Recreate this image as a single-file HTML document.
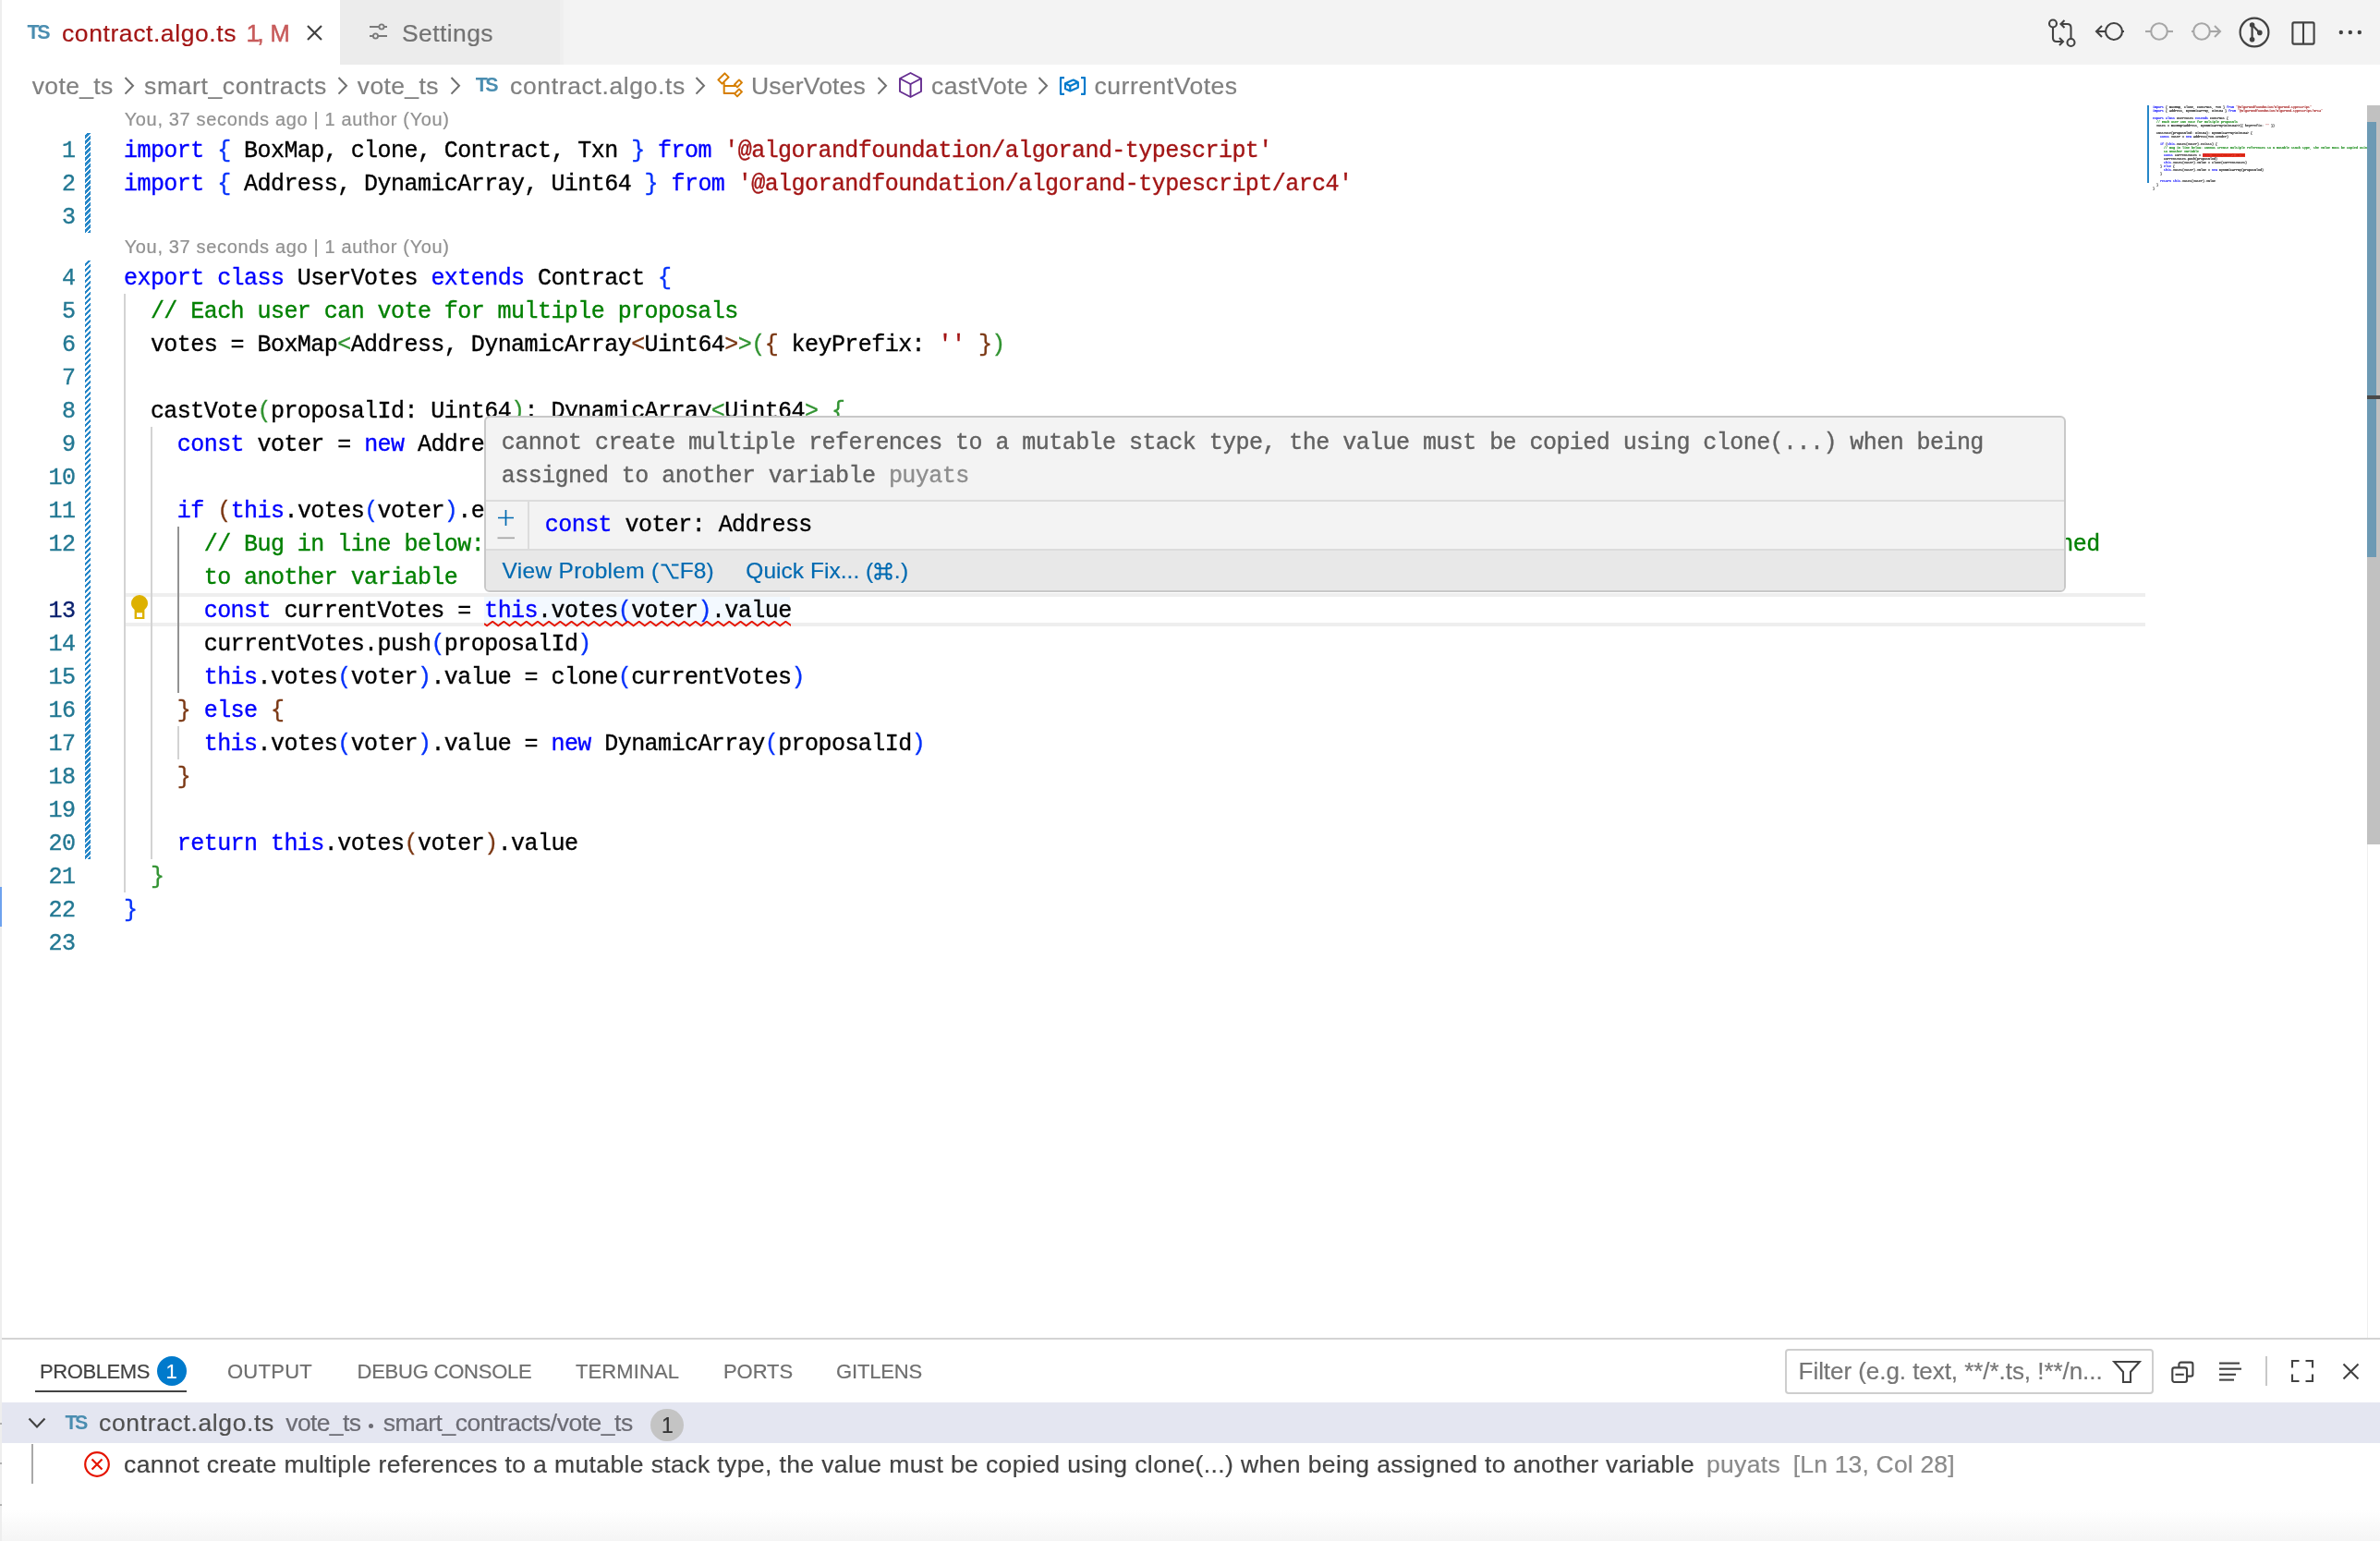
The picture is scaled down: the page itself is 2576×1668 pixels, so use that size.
<!DOCTYPE html>
<html><head><meta charset="utf-8"><title>contract.algo.ts</title>
<style>
html,body{margin:0;padding:0;}
body{width:2576px;height:1668px;overflow:hidden;position:relative;background:#fff;font-family:"Liberation Sans",sans-serif;}
.a{position:absolute;}
.t{position:absolute;white-space:pre;font-family:"Liberation Sans",sans-serif;-webkit-text-stroke:0.2px currentColor;}
.m{position:absolute;white-space:pre;font-family:"Liberation Mono",monospace;-webkit-text-stroke:0.35px currentColor;}
.mm .b1,.mm .b2,.mm .b3{color:#000 !important}.k{color:#0000ff}.s{color:#a31515}.c{color:#008000}.b1{color:#0431fa}.b2{color:#319331}.b3{color:#7b3814}
svg{position:absolute;overflow:visible}
</style></head><body>
<div id="root" style="position:absolute;left:0;top:0;width:2576px;height:1668px;overflow:hidden;background:#fff;will-change:transform">

<div class="a" style="left:0;top:0;width:2576px;height:70px;background:#f3f3f3"></div>
<div class="a" style="left:0;top:0;width:368px;height:70px;background:#ffffff"></div>
<div class="a" style="left:368px;top:0;width:238px;height:70px;background:#ececec"></div>
<div class="a" style="left:606px;top:0;width:4px;height:70px;background:#efefef"></div>
<div class="t" style="left:29.50px;top:24.60px;font-size:21.5px;line-height:21.5px;color:#4a8db0;letter-spacing:-2.487px;font-weight:bold;-webkit-text-stroke:0;">TS</div>
<div class="t" style="left:67.00px;top:22.86px;font-size:26.5px;line-height:26.5px;color:#a31515;letter-spacing:0.581px;">contract.algo.ts</div>
<div class="t" style="left:266.50px;top:22.86px;font-size:26.5px;line-height:26.5px;color:#c75a5a;letter-spacing:-3.050px;-webkit-text-stroke:0.5px currentColor;">1,</div>
<div class="t" style="left:292.50px;top:23.71px;font-size:25.5px;line-height:25.5px;color:#c75a5a;letter-spacing:-1.743px;-webkit-text-stroke:0.5px currentColor;">M</div>
<svg style="left:332px;top:27px" width="17" height="17" viewBox="0 0 17 17"><path d="M1 1L16 16M16 1L1 16" stroke="#424242" stroke-width="2.2" fill="none"/></svg>
<svg style="left:398px;top:22px" width="24" height="24" viewBox="0 0 24 24"><g stroke="#7a7a7a" stroke-width="2" fill="none"><path d="M2 7H21"/><path d="M2 17H21"/></g><circle cx="15" cy="7" r="2.6" fill="#ececec" stroke="#7a7a7a" stroke-width="1.8"/><circle cx="8.5" cy="17" r="2.6" fill="#ececec" stroke="#7a7a7a" stroke-width="1.8"/></svg>
<div class="t" style="left:435.00px;top:22.56px;font-size:26.5px;line-height:26.5px;color:#737373;letter-spacing:0.406px;">Settings</div>
<svg style="left:2216px;top:19px" width="32" height="32" viewBox="0 0 32 32"><g fill="none" stroke="#424242" stroke-width="2.1">
<circle cx="6" cy="6.5" r="4"/><circle cx="25.5" cy="27" r="4"/>
<path d="M6 10.5V22q0 4 4 4h6"/><path d="M13 22l4 4-4 4"/>
<path d="M25.5 23V11q0-4-4-4h-6"/><path d="M18.5 3l-4 4 4 4"/></g></svg>
<svg style="left:2266px;top:18px" width="36" height="32" viewBox="0 0 36 32"><g fill="none" stroke="#424242" stroke-width="2.1">
<circle cx="22" cy="16" r="9"/><path d="M3 16H13"/><path d="M9 10l-6 6 6 6"/><path d="M31 16h2"/></g></svg>
<svg style="left:2320px;top:18px" width="34" height="32" viewBox="0 0 34 32"><g fill="none" stroke="#a6a6a6" stroke-width="2.1">
<circle cx="17" cy="16" r="8.8"/><path d="M2 16H8"/><path d="M26 16H32"/></g></svg>
<svg style="left:2370px;top:18px" width="36" height="32" viewBox="0 0 36 32"><g fill="none" stroke="#a6a6a6" stroke-width="2.1">
<circle cx="13" cy="16" r="8.8"/><path d="M2 16H4"/><path d="M22 16H33"/><path d="M27 10l6 6-6 6"/></g></svg>
<svg style="left:2423px;top:18px" width="34" height="34" viewBox="0 0 34 34"><circle cx="17" cy="17" r="15.4" fill="none" stroke="#424242" stroke-width="2.2"/>
<g stroke="#424242" stroke-width="2.2"><path d="M14.6 9V24.7"/><path d="M14.6 9L22.8 17.4"/></g>
<circle cx="14.6" cy="9" r="2.8" fill="#424242"/><circle cx="22.8" cy="17.4" r="2.8" fill="#424242"/><circle cx="14.6" cy="24.7" r="2.8" fill="#424242"/></svg>
<svg style="left:2479px;top:22px" width="28" height="28" viewBox="0 0 28 28"><g fill="none" stroke="#424242" stroke-width="2.1">
<rect x="2.4" y="2.4" width="23.2" height="23.2" rx="1.5"/><path d="M14 2.4V25.6"/></g></svg>
<svg style="left:2528px;top:30px" width="30" height="10" viewBox="0 0 30 10"><g fill="#424242"><circle cx="5.8" cy="5" r="2.2"/><circle cx="15.8" cy="5" r="2.2"/><circle cx="25.8" cy="5" r="2.2"/></g></svg>
<div class="a" style="left:0;top:0;width:2px;height:1668px;background:#eeeeee;z-index:5"></div>
<div class="a" style="left:0;top:1540px;width:2px;height:2px;background:#b0b0b0;z-index:6"></div>
<div class="a" style="left:0;top:1583px;width:2px;height:2px;background:#b0b0b0;z-index:6"></div>
<div class="a" style="left:0;top:1628px;width:2px;height:2px;background:#b0b0b0;z-index:6"></div>
<div class="a" style="left:0;top:960px;width:2px;height:43px;background:#6ea2ee;z-index:6"></div>
<div class="t" style="left:34.70px;top:80.36px;font-size:26.5px;line-height:26.5px;color:#808080;letter-spacing:0.366px;">vote_ts</div>
<svg style="left:134px;top:83px" width="12" height="20" viewBox="0 0 12 20"><path d="M1.5 1L10 9.8 1.5 18.6" fill="none" stroke="#6f6f6f" stroke-width="2"/></svg>
<div class="t" style="left:156.00px;top:80.36px;font-size:26.5px;line-height:26.5px;color:#808080;letter-spacing:0.633px;">smart_contracts</div>
<svg style="left:365px;top:83px" width="12" height="20" viewBox="0 0 12 20"><path d="M1.5 1L10 9.8 1.5 18.6" fill="none" stroke="#6f6f6f" stroke-width="2"/></svg>
<div class="t" style="left:386.80px;top:80.36px;font-size:26.5px;line-height:26.5px;color:#808080;letter-spacing:0.366px;">vote_ts</div>
<svg style="left:487px;top:83px" width="12" height="20" viewBox="0 0 12 20"><path d="M1.5 1L10 9.8 1.5 18.6" fill="none" stroke="#6f6f6f" stroke-width="2"/></svg>
<div class="t" style="left:514.70px;top:82.30px;font-size:21.5px;line-height:21.5px;color:#4a8db0;letter-spacing:-2.487px;font-weight:bold;-webkit-text-stroke:0;">TS</div>
<div class="t" style="left:552.00px;top:80.36px;font-size:26.5px;line-height:26.5px;color:#808080;letter-spacing:0.643px;">contract.algo.ts</div>
<svg style="left:752px;top:83px" width="12" height="20" viewBox="0 0 12 20"><path d="M1.5 1L10 9.8 1.5 18.6" fill="none" stroke="#6f6f6f" stroke-width="2"/></svg>
<svg style="left:775px;top:77px" width="30" height="30" viewBox="0 0 30 30"><g fill="none" stroke="#d67e00" stroke-width="2" stroke-linejoin="round">
<rect x="3" y="5" width="10" height="6" transform="rotate(-45 8 8)"/>
<rect x="20.5" y="11.3" width="7" height="4.2" transform="rotate(-45 24 13.4)"/>
<rect x="20.5" y="21.3" width="7" height="4.2" transform="rotate(-45 24 23.4)"/>
<path d="M8.7 12.3V24H21"/><path d="M8.7 16H21"/></g></svg>
<div class="t" style="left:813.00px;top:80.36px;font-size:26.5px;line-height:26.5px;color:#808080;letter-spacing:0.194px;">UserVotes</div>
<svg style="left:949px;top:83px" width="12" height="20" viewBox="0 0 12 20"><path d="M1.5 1L10 9.8 1.5 18.6" fill="none" stroke="#6f6f6f" stroke-width="2"/></svg>
<svg style="left:972px;top:77px" width="27" height="30" viewBox="0 0 27 30"><g fill="none" stroke="#652d90" stroke-width="1.9" stroke-linejoin="round">
<path d="M13.5 2L25 8V22L13.5 28L2 22V8Z"/><path d="M2 8L13.5 14L25 8"/><path d="M13.5 14V28"/></g></svg>
<div class="t" style="left:1008.00px;top:80.36px;font-size:26.5px;line-height:26.5px;color:#808080;letter-spacing:0.418px;">castVote</div>
<svg style="left:1123px;top:83px" width="12" height="20" viewBox="0 0 12 20"><path d="M1.5 1L10 9.8 1.5 18.6" fill="none" stroke="#6f6f6f" stroke-width="2"/></svg>
<svg style="left:1146px;top:83px" width="30" height="20" viewBox="0 0 30 20"><g fill="none" stroke="#007acc" stroke-width="2.2" stroke-linejoin="round">
<path d="M6 1.2H2V18.8H6"/><path d="M24 1.2H28V18.8H24"/>
<path d="M7 7.3L15.7 3.5L20.8 6L20.8 11.8L12.3 15.5L7 13Z"/><path d="M7 7.3L12.3 10L20.8 6"/><path d="M12.3 10V15.5"/></g></svg>
<div class="t" style="left:1184.60px;top:80.36px;font-size:26.5px;line-height:26.5px;color:#808080;letter-spacing:0.518px;">currentVotes</div>
<div class="t" style="left:134.70px;top:118.87px;font-size:20px;line-height:20px;color:#919191;letter-spacing:0.655px;">You, 37 seconds ago | 1 author (You)</div>
<div class="t" style="left:134.70px;top:256.87px;font-size:20px;line-height:20px;color:#919191;letter-spacing:0.655px;">You, 37 seconds ago | 1 author (You)</div>
<div class="a" style="left:134px;top:642px;width:2188px;height:28px;border-top:4px solid #eeeeee;border-bottom:4px solid #eeeeee"></div>
<div class="a" style="left:524px;top:646px;width:331px;height:28px;background:rgba(173,214,255,0.15)"></div>
<div class="a" style="left:92px;top:144px;width:6px;height:108px;background:repeating-linear-gradient(-45deg,#2586c8 0px,#2586c8 2.2px,transparent 2.2px,transparent 4.24px)"></div>
<div class="a" style="left:92px;top:282px;width:6px;height:648px;background:repeating-linear-gradient(-45deg,#2586c8 0px,#2586c8 2.2px,transparent 2.2px,transparent 4.24px)"></div>
<div class="m" style="left:0;width:81.5px;text-align:right;top:146px;height:36px;font-size:25px;line-height:36px;letter-spacing:-0.552px;color:#237893">1</div>
<div class="m" style="left:0;width:81.5px;text-align:right;top:182px;height:36px;font-size:25px;line-height:36px;letter-spacing:-0.552px;color:#237893">2</div>
<div class="m" style="left:0;width:81.5px;text-align:right;top:218px;height:36px;font-size:25px;line-height:36px;letter-spacing:-0.552px;color:#237893">3</div>
<div class="m" style="left:0;width:81.5px;text-align:right;top:284px;height:36px;font-size:25px;line-height:36px;letter-spacing:-0.552px;color:#237893">4</div>
<div class="m" style="left:0;width:81.5px;text-align:right;top:320px;height:36px;font-size:25px;line-height:36px;letter-spacing:-0.552px;color:#237893">5</div>
<div class="m" style="left:0;width:81.5px;text-align:right;top:356px;height:36px;font-size:25px;line-height:36px;letter-spacing:-0.552px;color:#237893">6</div>
<div class="m" style="left:0;width:81.5px;text-align:right;top:392px;height:36px;font-size:25px;line-height:36px;letter-spacing:-0.552px;color:#237893">7</div>
<div class="m" style="left:0;width:81.5px;text-align:right;top:428px;height:36px;font-size:25px;line-height:36px;letter-spacing:-0.552px;color:#237893">8</div>
<div class="m" style="left:0;width:81.5px;text-align:right;top:464px;height:36px;font-size:25px;line-height:36px;letter-spacing:-0.552px;color:#237893">9</div>
<div class="m" style="left:0;width:81.5px;text-align:right;top:500px;height:36px;font-size:25px;line-height:36px;letter-spacing:-0.552px;color:#237893">10</div>
<div class="m" style="left:0;width:81.5px;text-align:right;top:536px;height:36px;font-size:25px;line-height:36px;letter-spacing:-0.552px;color:#237893">11</div>
<div class="m" style="left:0;width:81.5px;text-align:right;top:572px;height:36px;font-size:25px;line-height:36px;letter-spacing:-0.552px;color:#237893">12</div>
<div class="m" style="left:0;width:81.5px;text-align:right;top:644px;height:36px;font-size:25px;line-height:36px;letter-spacing:-0.552px;color:#0b216f">13</div>
<div class="m" style="left:0;width:81.5px;text-align:right;top:680px;height:36px;font-size:25px;line-height:36px;letter-spacing:-0.552px;color:#237893">14</div>
<div class="m" style="left:0;width:81.5px;text-align:right;top:716px;height:36px;font-size:25px;line-height:36px;letter-spacing:-0.552px;color:#237893">15</div>
<div class="m" style="left:0;width:81.5px;text-align:right;top:752px;height:36px;font-size:25px;line-height:36px;letter-spacing:-0.552px;color:#237893">16</div>
<div class="m" style="left:0;width:81.5px;text-align:right;top:788px;height:36px;font-size:25px;line-height:36px;letter-spacing:-0.552px;color:#237893">17</div>
<div class="m" style="left:0;width:81.5px;text-align:right;top:824px;height:36px;font-size:25px;line-height:36px;letter-spacing:-0.552px;color:#237893">18</div>
<div class="m" style="left:0;width:81.5px;text-align:right;top:860px;height:36px;font-size:25px;line-height:36px;letter-spacing:-0.552px;color:#237893">19</div>
<div class="m" style="left:0;width:81.5px;text-align:right;top:896px;height:36px;font-size:25px;line-height:36px;letter-spacing:-0.552px;color:#237893">20</div>
<div class="m" style="left:0;width:81.5px;text-align:right;top:932px;height:36px;font-size:25px;line-height:36px;letter-spacing:-0.552px;color:#237893">21</div>
<div class="m" style="left:0;width:81.5px;text-align:right;top:968px;height:36px;font-size:25px;line-height:36px;letter-spacing:-0.552px;color:#237893">22</div>
<div class="m" style="left:0;width:81.5px;text-align:right;top:1004px;height:36px;font-size:25px;line-height:36px;letter-spacing:-0.552px;color:#237893">23</div>
<div class="a" style="left:134px;top:318px;width:2px;height:648px;background:#d3d3d3"></div>
<div class="a" style="left:163px;top:462px;width:2px;height:468px;background:#d3d3d3"></div>
<div class="a" style="left:192px;top:570px;width:2px;height:180px;background:#939393"></div>
<div class="a" style="left:192px;top:786px;width:2px;height:36px;background:#d3d3d3"></div>
<div class="m" style="left:134px;top:146px;height:36px;font-size:25px;line-height:36px;letter-spacing:-0.552px;color:#000"><span class="k">import</span> <span class="b1">{</span> BoxMap, clone, Contract, Txn <span class="b1">}</span> <span class="k">from</span> <span class="s">'@algorandfoundation/algorand-typescript'</span></div>
<div class="m" style="left:134px;top:182px;height:36px;font-size:25px;line-height:36px;letter-spacing:-0.552px;color:#000"><span class="k">import</span> <span class="b1">{</span> Address, DynamicArray, Uint64 <span class="b1">}</span> <span class="k">from</span> <span class="s">'@algorandfoundation/algorand-typescript/arc4'</span></div>
<div class="m" style="left:134px;top:284px;height:36px;font-size:25px;line-height:36px;letter-spacing:-0.552px;color:#000"><span class="k">export</span> <span class="k">class</span> UserVotes <span class="k">extends</span> Contract <span class="b1">{</span></div>
<div class="m" style="left:134px;top:320px;height:36px;font-size:25px;line-height:36px;letter-spacing:-0.552px;color:#000">  <span class="c">// Each user can vote for multiple proposals</span></div>
<div class="m" style="left:134px;top:356px;height:36px;font-size:25px;line-height:36px;letter-spacing:-0.552px;color:#000">  votes = BoxMap<span class="b2">&lt;</span>Address, DynamicArray<span class="b3">&lt;</span>Uint64<span class="b3">&gt;</span><span class="b2">&gt;</span><span class="b2">(</span><span class="b3">{</span> keyPrefix: <span class="s">''</span> <span class="b3">}</span><span class="b2">)</span></div>
<div class="m" style="left:134px;top:428px;height:36px;font-size:25px;line-height:36px;letter-spacing:-0.552px;color:#000">  castVote<span class="b2">(</span>proposalId: Uint64<span class="b2">)</span>: DynamicArray<span class="b2">&lt;</span>Uint64<span class="b2">&gt;</span> <span class="b2">{</span></div>
<div class="m" style="left:134px;top:464px;height:36px;font-size:25px;line-height:36px;letter-spacing:-0.552px;color:#000">    <span class="k">const</span> voter = <span class="k">new</span> Address<span class="b3">(</span>Txn.sender<span class="b3">)</span></div>
<div class="m" style="left:134px;top:536px;height:36px;font-size:25px;line-height:36px;letter-spacing:-0.552px;color:#000">    <span class="k">if</span> <span class="b3">(</span><span class="k">this</span>.votes<span class="b1">(</span>voter<span class="b1">)</span>.exists<span class="b3">)</span> <span class="b3">{</span></div>
<div class="m" style="left:134px;top:572px;height:36px;font-size:25px;line-height:36px;letter-spacing:-0.552px;color:#000">      <span class="c">// Bug in line below: cannot create multiple references to a mutable stack type, the value must be copied using clone(...) when being assigned</span></div>
<div class="m" style="left:134px;top:608px;height:36px;font-size:25px;line-height:36px;letter-spacing:-0.552px;color:#000">      <span class="c">to another variable</span></div>
<div class="m" style="left:134px;top:644px;height:36px;font-size:25px;line-height:36px;letter-spacing:-0.552px;color:#000">      <span class="k">const</span> currentVotes = <span class="k">this</span>.votes<span class="b1">(</span>voter<span class="b1">)</span>.value</div>
<div class="m" style="left:134px;top:680px;height:36px;font-size:25px;line-height:36px;letter-spacing:-0.552px;color:#000">      currentVotes.push<span class="b1">(</span>proposalId<span class="b1">)</span></div>
<div class="m" style="left:134px;top:716px;height:36px;font-size:25px;line-height:36px;letter-spacing:-0.552px;color:#000">      <span class="k">this</span>.votes<span class="b1">(</span>voter<span class="b1">)</span>.value = clone<span class="b1">(</span>currentVotes<span class="b1">)</span></div>
<div class="m" style="left:134px;top:752px;height:36px;font-size:25px;line-height:36px;letter-spacing:-0.552px;color:#000">    <span class="b3">}</span> <span class="k">else</span> <span class="b3">{</span></div>
<div class="m" style="left:134px;top:788px;height:36px;font-size:25px;line-height:36px;letter-spacing:-0.552px;color:#000">      <span class="k">this</span>.votes<span class="b1">(</span>voter<span class="b1">)</span>.value = <span class="k">new</span> DynamicArray<span class="b1">(</span>proposalId<span class="b1">)</span></div>
<div class="m" style="left:134px;top:824px;height:36px;font-size:25px;line-height:36px;letter-spacing:-0.552px;color:#000">    <span class="b3">}</span></div>
<div class="m" style="left:134px;top:896px;height:36px;font-size:25px;line-height:36px;letter-spacing:-0.552px;color:#000">    <span class="k">return</span> <span class="k">this</span>.votes<span class="b3">(</span>voter<span class="b3">)</span>.value</div>
<div class="m" style="left:134px;top:932px;height:36px;font-size:25px;line-height:36px;letter-spacing:-0.552px;color:#000">  <span class="b2">}</span></div>
<div class="m" style="left:134px;top:968px;height:36px;font-size:25px;line-height:36px;letter-spacing:-0.552px;color:#000"><span class="b1">}</span></div>
<svg style="left:524px;top:672px;overflow:hidden" width="332" height="7" viewBox="0 0 332 7"><path d="M0 3 L3.05 5.2 L9.15 0.8 L15.25 5.2 L21.35 0.8 L27.45 5.2 L33.55 0.8 L39.65 5.2 L45.75 0.8 L51.85 5.2 L57.95 0.8 L64.05 5.2 L70.15 0.8 L76.25 5.2 L82.35 0.8 L88.45 5.2 L94.55 0.8 L100.65 5.2 L106.75 0.8 L112.85 5.2 L118.95 0.8 L125.05 5.2 L131.15 0.8 L137.25 5.2 L143.35 0.8 L149.45 5.2 L155.55 0.8 L161.65 5.2 L167.75 0.8 L173.85 5.2 L179.95 0.8 L186.05 5.2 L192.15 0.8 L198.25 5.2 L204.35 0.8 L210.45 5.2 L216.55 0.8 L222.65 5.2 L228.75 0.8 L234.85 5.2 L240.95 0.8 L247.05 5.2 L253.15 0.8 L259.25 5.2 L265.35 0.8 L271.45 5.2 L277.55 0.8 L283.65 5.2 L289.75 0.8 L295.85 5.2 L301.95 0.8 L308.05 5.2 L314.15 0.8 L320.25 5.2 L326.35 0.8 L332.45 5.2 L338.55 0.8" fill="none" stroke="#e51400" stroke-width="2"/></svg>
<svg style="left:141px;top:643px" width="20" height="28" viewBox="0 0 20 28"><path d="M10 1A9 9 0 0 0 1 10c0 3.2 1.6 5 3.6 7V27H15.4V17c2-2 3.6-3.8 3.6-7A9 9 0 0 0 10 1z" fill="#ddb100"/><rect x="7" y="20.3" width="6" height="4.7" fill="#fff"/></svg>
<div class="a" style="left:2324px;top:114px;width:2px;height:84px;background:#2586c8"></div>
<div class="a" style="left:2562px;top:114px;width:0;height:0"></div>
<div class="m mm" style="left:2330px;top:114px;width:16600px;height:900px;overflow:hidden;clip-path:inset(0 0 0 0);transform-origin:0 0;transform:scale(0.13889,0.11111);font-size:24px;line-height:36px;font-weight:bold;color:#000;opacity:1"><div style="height:36px"><span class="k">import</span> <span class="b1">{</span> BoxMap, clone, Contract, Txn <span class="b1">}</span> <span class="k">from</span> <span class="s">'@algorandfoundation/algorand-typescript'</span>&#8203;</div><div style="height:36px"><span class="k">import</span> <span class="b1">{</span> Address, DynamicArray, Uint64 <span class="b1">}</span> <span class="k">from</span> <span class="s">'@algorandfoundation/algorand-typescript/arc4'</span>&#8203;</div><div style="height:36px">&#8203;</div><div style="height:36px"><span class="k">export</span> <span class="k">class</span> UserVotes <span class="k">extends</span> Contract <span class="b1">{</span>&#8203;</div><div style="height:36px">  <span class="c">// Each user can vote for multiple proposals</span>&#8203;</div><div style="height:36px">  votes = BoxMap<span class="b2">&lt;</span>Address, DynamicArray<span class="b3">&lt;</span>Uint64<span class="b3">&gt;</span><span class="b2">&gt;</span><span class="b2">(</span><span class="b3">{</span> keyPrefix: <span class="s">''</span> <span class="b3">}</span><span class="b2">)</span>&#8203;</div><div style="height:36px">&#8203;</div><div style="height:36px">  castVote<span class="b2">(</span>proposalId: Uint64<span class="b2">)</span>: DynamicArray<span class="b2">&lt;</span>Uint64<span class="b2">&gt;</span> <span class="b2">{</span>&#8203;</div><div style="height:36px">    <span class="k">const</span> voter = <span class="k">new</span> Address<span class="b3">(</span>Txn.sender<span class="b3">)</span>&#8203;</div><div style="height:36px">&#8203;</div><div style="height:36px">    <span class="k">if</span> <span class="b3">(</span><span class="k">this</span>.votes<span class="b1">(</span>voter<span class="b1">)</span>.exists<span class="b3">)</span> <span class="b3">{</span>&#8203;</div><div style="height:36px">      <span class="c">// Bug in line below: cannot create multiple references to a mutable stack type, the value must be copied using clone(...) when being assigned</span>&#8203;</div><div style="height:36px">      <span class="c">to another variable</span>&#8203;</div><div style="height:36px">      <span class="k">const</span> currentVotes = <span class="k">this</span>.votes<span class="b1">(</span>voter<span class="b1">)</span>.value&#8203;</div><div style="height:36px">      currentVotes.push<span class="b1">(</span>proposalId<span class="b1">)</span>&#8203;</div><div style="height:36px">      <span class="k">this</span>.votes<span class="b1">(</span>voter<span class="b1">)</span>.value = clone<span class="b1">(</span>currentVotes<span class="b1">)</span>&#8203;</div><div style="height:36px">    <span class="b3">}</span> <span class="k">else</span> <span class="b3">{</span>&#8203;</div><div style="height:36px">      <span class="k">this</span>.votes<span class="b1">(</span>voter<span class="b1">)</span>.value = <span class="k">new</span> DynamicArray<span class="b1">(</span>proposalId<span class="b1">)</span>&#8203;</div><div style="height:36px">    <span class="b3">}</span>&#8203;</div><div style="height:36px">&#8203;</div><div style="height:36px">    <span class="k">return</span> <span class="k">this</span>.votes<span class="b3">(</span>voter<span class="b3">)</span>.value&#8203;</div><div style="height:36px">  <span class="b2">}</span>&#8203;</div><div style="height:36px"><span class="b1">}</span>&#8203;</div><div style="height:36px">&#8203;</div></div>
<div class="a" style="left:2384px;top:166px;width:46px;height:4px;background:#e51400;opacity:0.85"></div>
<div class="a" style="left:2562px;top:114px;width:14px;height:1334px;border-left:1px solid #efefef;box-sizing:border-box"></div>
<div class="a" style="left:2562px;top:114px;width:14px;height:800px;background:#c1c1c1"></div>
<div class="a" style="left:2562px;top:132px;width:10px;height:471px;background:#6d9ab4"></div>
<div class="a" style="left:2562px;top:428px;width:14px;height:4px;background:#4a4a4a"></div>
<div class="a" style="left:524px;top:450px;width:1712px;height:191px;box-sizing:border-box;background:#f3f3f3;border:2px solid #c8c8c8;border-radius:6px;overflow:hidden;z-index:10"><div class="a" style="left:0;top:89px;width:100%;height:2px;background:#dcdcdc"></div><div class="a" style="left:0;top:142px;width:100%;height:47px;background:#e8e8e8;border-top:2px solid #dcdcdc;box-sizing:border-box"></div><div class="a" style="left:44.5px;top:91px;width:2px;height:51px;background:#dcdcdc"></div></div>
<div class="m" style="left:542.8px;top:462px;height:36px;font-size:25px;line-height:36px;letter-spacing:-0.552px;color:#616161;z-index:11;">cannot create multiple references to a mutable stack type, the value must be copied using clone(...) when being</div>
<div class="m" style="left:542.8px;top:498px;height:36px;font-size:25px;line-height:36px;letter-spacing:-0.552px;color:#616161;z-index:11;">assigned to another variable <span style="color:#8d8d8d">puyats</span></div>
<div class="m" style="left:589.8px;top:551px;height:36px;font-size:25px;line-height:36px;letter-spacing:-0.552px;color:#000;z-index:11;"><span class="k">const</span> voter: Address</div>
<svg style="left:537px;top:551px;z-index:11;" width="22" height="36" viewBox="0 0 22 36"><path d="M10.5 1V18M2 9.5H19" stroke="#006ab1" stroke-width="1.7"/><path d="M1.5 31.3H20" stroke="#a6a6a6" stroke-width="1.7"/></svg>
<div class="t" style="left:543.60px;top:605.86px;font-size:24.5px;line-height:24.5px;color:#006ab1;letter-spacing:0.309px;z-index:11;">View Problem (</div>
<svg style="left:715px;top:610px;z-index:11;" width="20" height="17" viewBox="0 0 20 17"><path d="M0.5 1.5H6L13.5 15.5H19.5M12 1.5H19.5" fill="none" stroke="#006ab1" stroke-width="2.2"/></svg>
<div class="t" style="left:735.80px;top:605.86px;font-size:24.5px;line-height:24.5px;color:#006ab1;letter-spacing:0.083px;z-index:11;">F8)</div>
<div class="t" style="left:807.30px;top:605.86px;font-size:24.5px;line-height:24.5px;color:#006ab1;letter-spacing:0.037px;z-index:11;">Quick Fix... (</div>
<svg style="left:946px;top:609px;z-index:11;" width="20" height="19" viewBox="0 0 20 19"><path d="M6.5 6.2V3.8A2.6 2.6 0 1 0 3.9 6.2H16.1A2.6 2.6 0 1 0 13.5 3.8V15.2A2.6 2.6 0 1 0 16.1 12.6H3.9A2.6 2.6 0 1 0 6.5 15.2Z" fill="none" stroke="#006ab1" stroke-width="2"/></svg>
<div class="t" style="left:967.80px;top:605.86px;font-size:24.5px;line-height:24.5px;color:#006ab1;letter-spacing:0.517px;z-index:11;">.)</div>
<div class="a" style="left:2px;top:1448px;width:2574px;height:2px;background:#d4d4d4"></div>
<div class="t" style="left:43.00px;top:1473.97px;font-size:22px;line-height:22px;color:#424242;letter-spacing:-0.408px;">PROBLEMS</div>
<div class="a" style="left:170px;top:1468px;width:32px;height:32px;border-radius:16px;background:#007acc"></div>
<div class="t" style="left:179.50px;top:1474.37px;font-size:22px;line-height:22px;color:#ffffff;letter-spacing:0.764px;">1</div>
<div class="a" style="left:38px;top:1505px;width:164px;height:2px;background:#424242"></div>
<div class="t" style="left:246.00px;top:1473.97px;font-size:22px;line-height:22px;color:#6f6f6f;letter-spacing:0.260px;">OUTPUT</div>
<div class="t" style="left:386.50px;top:1473.97px;font-size:22px;line-height:22px;color:#6f6f6f;letter-spacing:-0.226px;">DEBUG CONSOLE</div>
<div class="t" style="left:623.00px;top:1473.97px;font-size:22px;line-height:22px;color:#6f6f6f;letter-spacing:0.095px;">TERMINAL</div>
<div class="t" style="left:783.00px;top:1473.97px;font-size:22px;line-height:22px;color:#6f6f6f;letter-spacing:-0.078px;">PORTS</div>
<div class="t" style="left:905.00px;top:1473.97px;font-size:22px;line-height:22px;color:#6f6f6f;letter-spacing:-0.162px;">GITLENS</div>
<div class="a" style="left:1932px;top:1460px;width:399px;height:49px;box-sizing:border-box;border:2px solid #cecece;border-radius:4px;background:#fff"></div>
<div class="t" style="left:1946.60px;top:1470.99px;font-size:26px;line-height:26px;color:#767676;letter-spacing:-0.052px;">Filter (e.g. text, **/*.ts, !**/n...</div>
<svg style="left:2286px;top:1472px" width="32" height="26" viewBox="0 0 32 26"><path d="M2.2 2H29.8L20 13V24H12V13Z" fill="none" stroke="#424242" stroke-width="2.1" stroke-linejoin="miter"/></svg>
<svg style="left:2349px;top:1472px" width="27" height="27" viewBox="0 0 27 27"><g stroke="#424242" stroke-width="2.1">
<rect x="9.4" y="2.6" width="15" height="15" rx="2.2" fill="none"/><rect x="2.3" y="8.4" width="15.7" height="15.6" rx="2.2" fill="#ffffff"/><path d="M5.5 15.8H14.8"/></g></svg>
<svg style="left:2401px;top:1474px" width="26" height="22" viewBox="0 0 26 22"><g stroke="#424242" stroke-width="2.1"><path d="M1 1.6H23"/><path d="M1 7.7H25"/><path d="M1 13.8H19"/><path d="M1 19.6H17"/></g></svg>
<div class="a" style="left:2452px;top:1468px;width:2px;height:32px;background:#c8c8c8"></div>
<svg style="left:2479px;top:1471px" width="26" height="26" viewBox="0 0 26 26"><g fill="none" stroke="#424242" stroke-width="2.1">
<path d="M2 9.5V2H9.5"/><path d="M16.5 2H24V9.5"/><path d="M24 16.5V24H16.5"/><path d="M9.5 24H2V16.5"/></g></svg>
<svg style="left:2534.5px;top:1474.5px" width="19" height="19" viewBox="0 0 19 19"><path d="M1.5 1.5L17.5 17.5M17.5 1.5L1.5 17.5" stroke="#424242" stroke-width="2.1"/></svg>
<div class="a" style="left:2px;top:1518px;width:2574px;height:44px;background:#e4e6f1"></div>
<svg style="left:30px;top:1534px" width="20" height="13" viewBox="0 0 20 13"><path d="M1.5 1.5L10 10.5 18.5 1.5" fill="none" stroke="#424242" stroke-width="2.2"/></svg>
<div class="t" style="left:70.40px;top:1530.40px;font-size:21.5px;line-height:21.5px;color:#4a8db0;letter-spacing:-2.487px;font-weight:bold;-webkit-text-stroke:0;">TS</div>
<div class="t" style="left:107.00px;top:1526.56px;font-size:26.5px;line-height:26.5px;color:#505050;letter-spacing:0.643px;">contract.algo.ts</div>
<div class="t" style="left:309.30px;top:1526.56px;font-size:26.5px;line-height:26.5px;color:#6c6c74;letter-spacing:-0.634px;">vote_ts</div>
<div class="a" style="left:399px;top:1540.5px;width:5px;height:5px;border-radius:3px;background:#6c6c74"></div>
<div class="t" style="left:414.70px;top:1526.56px;font-size:26.5px;line-height:26.5px;color:#6c6c74;letter-spacing:-0.492px;">smart_contracts/vote_ts</div>
<div class="a" style="left:704px;top:1525px;width:36px;height:35px;border-radius:18px;background:#c4c4c4"></div>
<div class="t" style="left:716.00px;top:1531.53px;font-size:23px;line-height:23px;color:#333333;letter-spacing:1.208px;">1</div>
<div class="a" style="left:34px;top:1563px;width:2px;height:43px;background:#a9a9a9"></div>
<svg style="left:90px;top:1570px" width="30" height="30" viewBox="0 0 30 30"><circle cx="15" cy="15" r="12.8" fill="none" stroke="#e51400" stroke-width="2.2"/><path d="M9.5 9.5L20.5 20.5M20.5 9.5L9.5 20.5" stroke="#e51400" stroke-width="2.2"/></svg>
<div class="t" style="left:134.00px;top:1572.26px;font-size:26.5px;line-height:26.5px;color:#424242;letter-spacing:0.390px;">cannot create multiple references to a mutable stack type, the value must be copied using clone(...) when being assigned to another variable</div>
<div class="t" style="left:1847.00px;top:1572.26px;font-size:26.5px;line-height:26.5px;color:#8a8a8a;letter-spacing:0.320px;">puyats</div>
<div class="t" style="left:1940.80px;top:1572.26px;font-size:26.5px;line-height:26.5px;color:#8a8a8a;letter-spacing:0.175px;">[Ln 13, Col 28]</div>
<div class="a" style="left:2px;top:1634px;width:2574px;height:34px;background:linear-gradient(#ffffff,#f5f5f5)"></div>
</div></body></html>
